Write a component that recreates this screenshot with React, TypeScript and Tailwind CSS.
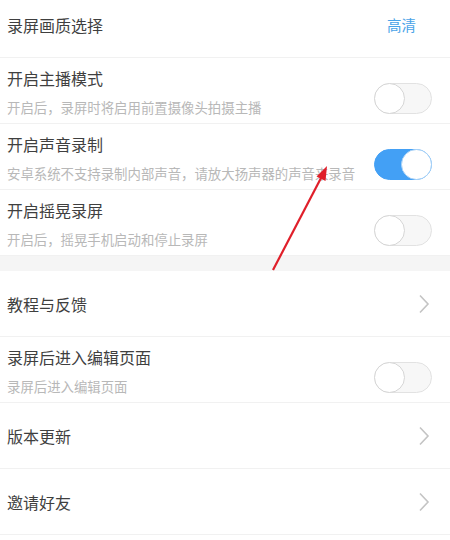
import React from "react";

const font = { fontFamily: '"Noto Sans CJK SC", "Noto Sans", sans-serif' };

function Toggle({ on }: { on: boolean }) {
  return (
    <div
      className={
        "relative h-[31px] w-[58px] shrink-0 rounded-full border " +
        (on ? "border-[#43a0f5] bg-[#43a0f5]" : "border-[#e2e2e2] bg-[#f7f7f7]")
      }
    >
      <div
        className={
          "absolute top-[-1px] h-[31px] w-[31px] rounded-full border bg-white " +
          (on ? "right-[-1px] border-[#a9d2f7]" : "left-[-1px] border-[#d6d6d6]")
        }
      />
    </div>
  );
}

function Chevron() {
  return (
    <svg width="12" height="20" viewBox="0 0 12 20" className="mr-[20px] shrink-0">
      <path d="M2 1.5 L10 10 L2 18.5" fill="none" stroke="#c4c4c4" strokeWidth="1.6" />
    </svg>
  );
}

function SwitchRow({ title, sub, on }: { title: string; sub: string; on: boolean }) {
  return (
    <div className="flex h-[66px] items-start justify-between border-b border-[#f1f1f1] pl-[7px] pr-[18px]">
      <div className="pt-[9px]">
        <div className="text-[16px] leading-[22px] text-[#3f3f3f]">{title}</div>
        <div className="mt-[8px] text-[13.4px] leading-[20px] text-[#b8b8b8]">{sub}</div>
      </div>
      <div className="mt-[25px]">
        <Toggle on={on} />
      </div>
    </div>
  );
}

function LinkRow({ title }: { title: string }) {
  return (
    <div className="flex h-[66px] items-center justify-between border-b border-[#f1f1f1] pl-[7px]">
      <div className="text-[16px] leading-[22px] text-[#3f3f3f]">{title}</div>
      <Chevron />
    </div>
  );
}

export default function App() {
  return (
    <div className="relative h-[540px] w-[450px] overflow-hidden bg-white" style={font}>
      <div className="flex h-[58px] items-start justify-between border-b border-[#f1f1f1] pl-[7px] pr-[34px] pt-[14px]">
        <div className="text-[16px] leading-[22px] text-[#3f3f3f]">录屏画质选择</div>
        <div className="text-[14.5px] leading-[22px] text-[#4aa3e8]">高清</div>
      </div>
      <SwitchRow title="开启主播模式" sub="开启后，录屏时将启用前置摄像头拍摄主播" on={false} />
      <SwitchRow title="开启声音录制" sub="安卓系统不支持录制内部声音，请放大扬声器的声音来录音" on={true} />
      <SwitchRow title="开启摇晃录屏" sub="开启后，摇晃手机启动和停止录屏" on={false} />
      <div className="h-[15px] bg-[#f5f5f5]" />
      <LinkRow title="教程与反馈" />
      <SwitchRow title="录屏后进入编辑页面" sub="录屏后进入编辑页面" on={false} />
      <LinkRow title="版本更新" />
      <LinkRow title="邀请好友" />

      <svg className="pointer-events-none absolute left-0 top-0" width="450" height="540">
        <line x1="273" y1="270" x2="321" y2="178" stroke="#e01f2a" strokeWidth="2.2" />
        <polygon points="327,166 325.5,181 316.5,176.5" fill="#e01f2a" />
      </svg>
    </div>
  );
}
